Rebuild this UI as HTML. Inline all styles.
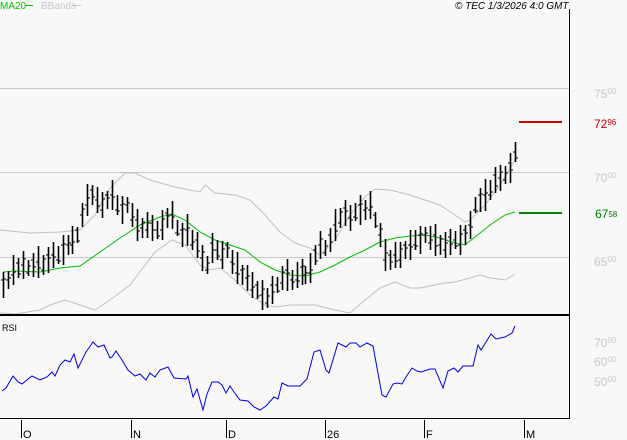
<!DOCTYPE html>
<html><head><meta charset="utf-8"><style>
html,body{margin:0;padding:0;background:#f8f8f8;}
body{width:627px;height:440px;overflow:hidden;position:relative;font-family:"Liberation Sans",sans-serif;}
svg{position:absolute;left:0;top:0;}
</style></head><body>
<svg id="s" width="627" height="440" xmlns="http://www.w3.org/2000/svg" font-family="Liberation Sans, sans-serif">
<rect width="627" height="440" fill="#f8f8f8"/>
<g stroke="#c8c8c8" stroke-width="1">
<line x1="0" y1="88.5" x2="569" y2="88.5"/>
<line x1="0" y1="172.5" x2="569" y2="172.5"/>
<line x1="0" y1="257.5" x2="569" y2="257.5"/>
</g>
<g fill="none" stroke="#c0c0c0" stroke-width="1">
<polyline points="0,230 30,233 60,232 80,230 95,215 110,188 125,173 135,173 150,180 175,187 200,192 205,185 215,193 235,195 250,200 265,215 280,232 295,243 310,248 320,255 335,240 350,215 365,197 375,189 390,190 410,195 425,200 440,205 455,215 465,222 470,220 485,205 500,185 515,160"/>
<polyline points="0,313 15,314 40,310 50,305 65,300 80,305 95,310 110,300 130,285 145,265 155,252 172,240 185,245 200,265 210,270 220,268 235,280 250,295 265,305 275,307 290,305 305,305 315,305 335,310 350,313 365,300 380,288 395,282 410,288 420,288 435,285 445,283 455,282 470,278 480,275 490,278 505,280 515,274"/>
</g>
<polyline fill="none" stroke="#00c000" stroke-width="1" points="3,272 15,271 40,272 60,268 80,266 100,252 120,238 140,225 160,217 172,214 185,220 200,232 215,240 230,245 245,250 260,262 275,270 290,275 305,276 320,272 335,265 350,257 365,250 380,242 395,238 410,236 425,235 440,238 455,243 465,245 475,237 490,225 505,215 515,212"/>
<path id="bars" fill="none" stroke="#000" stroke-width="1.6" d=""/>
<path id="ticks" fill="none" stroke="#000" stroke-width="1" d=""/>
<line x1="519" y1="122" x2="562" y2="122" stroke="#d00000" stroke-width="2"/>
<line x1="519" y1="213" x2="562" y2="213" stroke="#008000" stroke-width="2"/>
<line x1="569.5" y1="9" x2="569.5" y2="419" stroke="#000"/>
<line x1="0" y1="315" x2="569" y2="315" stroke="#000" stroke-width="2"/>
<line x1="0" y1="418.5" x2="569" y2="418.5" stroke="#000"/>
<g fill="#c8c8c8" font-size="12">
<text x="594" y="98">75<tspan font-size="8" dy="-4">00</tspan></text>
<text x="594" y="182">70<tspan font-size="8" dy="-4">00</tspan></text>
<text x="594" y="266">65<tspan font-size="8" dy="-4">00</tspan></text>
<text x="594" y="347">70<tspan font-size="8" dy="-4">00</tspan></text>
<text x="594" y="366">60<tspan font-size="8" dy="-4">00</tspan></text>
<text x="594" y="386">50<tspan font-size="8" dy="-4">00</tspan></text>
</g>
<text x="594" y="128" fill="#d00000" font-size="12">72<tspan font-size="8" dy="-3">96</tspan></text>
<text x="595" y="218" fill="#008000" font-size="12">67<tspan font-size="8" dy="-1">58</tspan></text>
<polyline fill="none" stroke="#0000e0" stroke-width="1" points="2,391 6,388 13,376 18,382 22,384 28,379 32,376 40,380 47,377 52,372 55,376 60,365 65,360 70,362 74,354 78,368 86,352 93,342 98,347 104,345 110,358 112,357 116,351 122,360 128,370 135,376 140,374 146,380 150,373 155,377 160,370 168,367 174,378 186,379 188,376 193,397 197,389 203,410 207,394 212,382 218,382 222,385 226,393 230,386 234,392 240,400 248,401 254,407 260,410 266,406 274,397 278,399 282,383 288,386 300,386 307,379 314,352 320,350 326,370 329,373 338,343 346,347 350,343 356,343 360,347 367,343 373,346 382,395 386,397 393,384 397,383 402,384 406,377 412,368 417,371 421,372 430,369 435,369 443,388 448,371 454,368 458,372 463,366 473,366 478,345 481,350 491,334 496,339 505,337 512,333 515,326"/>
<text x="2" y="331" font-size="9" fill="#000">RSI</text>
<text x="0" y="9" font-size="10" fill="#00c000">MA20</text>
<line x1="25" y1="5.5" x2="33" y2="5.5" stroke="#00c000"/>
<text x="41" y="9" font-size="10" fill="#c8c8c8">BBands</text>
<line x1="72" y1="5.5" x2="81" y2="5.5" stroke="#c8c8c8"/>
<text x="455" y="9" font-size="10" font-style="italic" fill="#000">© TEC 1/3/2026 4:0 GMT</text>
<g stroke="#000">
<line x1="21.5" y1="420" x2="21.5" y2="438"/><line x1="131.5" y1="420" x2="131.5" y2="438"/>
<line x1="226.5" y1="420" x2="226.5" y2="438"/><line x1="325.5" y1="420" x2="325.5" y2="438"/>
<line x1="424.5" y1="420" x2="424.5" y2="438"/><line x1="524.5" y1="420" x2="524.5" y2="438"/>
</g>
<g font-size="11" fill="#000">
<text x="23" y="438">O</text><text x="133" y="438">N</text><text x="228" y="438">D</text>
<text x="327" y="438">26</text><text x="426" y="438">F</text><text x="526" y="438">M</text>
</g>
</svg>
<script>
var m=[[3,285],[8,280],[13,270],[18,268],[23,265],[28,268],[33,265],[38,262],[43,265],[48,260],[53,255],[58,255],[63,250],[68,245],[72,240],[77,235],[82,215],[87,200],[92,195],[97,200],[102,205],[107,200],[112,195],[117,205],[122,210],[127,205],[132,215],[137,225],[142,228],[147,225],[152,228],[157,230],[162,225],[167,218],[172,215],[177,228],[182,235],[187,230],[192,240],[197,245],[202,258],[207,265],[212,248],[217,250],[222,255],[227,250],[232,262],[237,268],[242,275],[247,278],[252,285],[257,290],[262,295],[267,298],[272,290],[277,285],[282,278],[287,275],[292,280],[297,275],[302,272],[305,275],[310,268],[315,255],[320,245],[325,248],[330,240],[335,225],[340,218],[345,213],[350,218],[355,212],[360,210],[365,210],[370,205],[375,220],[380,235],[385,255],[390,260],[395,255],[400,255],[405,250],[410,245],[415,240],[420,240],[425,235],[430,238],[435,240],[440,245],[445,245],[450,242],[455,240],[460,240],[465,235],[470,225],[475,205],[480,200],[485,195],[490,190],[495,180],[500,178],[505,175],[510,168],[515,152]];
var d="",t="",r=[13,9,15,10,14,8,12,16,10,13];
for(var i=0;i<m.length;i++){var x=m[i][0]+0.5,y=m[i][1],h=r[i%10];var o=y+((i%3)-1)*5,c=y+((i%4)-1.5)*4;
d+="M"+x+" "+(y-h)+"V"+(y+h);t+="M"+(x-2.5)+" "+o+"H"+x+"M"+x+" "+c+"H"+(x+2.5);}
document.getElementById("bars").setAttribute("d",d);
document.getElementById("ticks").setAttribute("d",t);
</script>
</body></html>
